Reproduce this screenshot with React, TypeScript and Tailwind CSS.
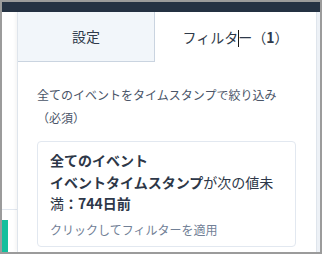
import React from 'react';

const font = { fontFamily: '"Noto Sans CJK JP", "Noto Sans", sans-serif' };

export default function App() {
  return (
    <div
      className="w-[322px] h-[254px] border-2 border-[#9b9b9b] bg-white flex flex-col overflow-hidden"
      style={font}
    >
      {/* top bar */}
      <div className="h-[10px] shrink-0 bg-[#253243]" />

      <div className="flex flex-1 min-h-0">
        {/* left strip */}
        <div className="w-[15px] shrink-0 flex flex-col">
          <div className="h-[197px] shrink-0" />
          <div className="h-px shrink-0 bg-[#e2e8f0]" />
          <div className="h-[10px] shrink-0" />
          <div className="w-[6px] flex-1 bg-[#13bf9d]" />
        </div>

        {/* panel */}
        <div className="w-[300px] shrink-0 flex flex-col border-l border-r border-[#dfe5ec] shadow-[-2px_0_3px_rgba(0,0,0,0.04)]">
          <div className="flex h-[50px] shrink-0">
            <div className="w-[137px] flex items-center justify-center bg-[#f2f6fa] border-r border-b border-[#cad4e0] text-[14px] text-[#2f3a4a]">
              設定
            </div>
            <div className="flex-1 flex items-center justify-center text-[14px] text-[#2f3a4a]">
              <span>
                フィルタ
                <span className="inline-block w-px h-[17px] bg-[#1a1a1a] align-middle -mr-px" />
                ー（<span className="font-bold">1</span>）
              </span>
            </div>
          </div>

          <div className="pt-[21px] pl-[19px] pr-[20px]">
            <p className="text-[12px] leading-[23px] text-[#4a5568]">
              全てのイベントをタイムスタンプで絞り込み（必須）
            </p>
            <div className="mt-[12px] border border-[#e2e8f0] rounded-[4px] pl-[12px] pr-[10px] pt-[8px] pb-[6px]">
              <p className="text-[14px] leading-[21.5px] text-[#2d3748]">
                <span className="font-bold">全てのイベント</span>
                <br />
                <span className="font-bold">イベントタイムスタンプ</span>が次の値未満
                <span className="font-bold">：744日前</span>
              </p>
              <p className="mt-[5px] text-[12px] leading-[20px] text-[#718096]">
                クリックしてフィルターを適用
              </p>
            </div>
          </div>
        </div>

        {/* right strip */}
        <div className="flex-1 bg-[#edf1f6]" />
      </div>
    </div>
  );
}
